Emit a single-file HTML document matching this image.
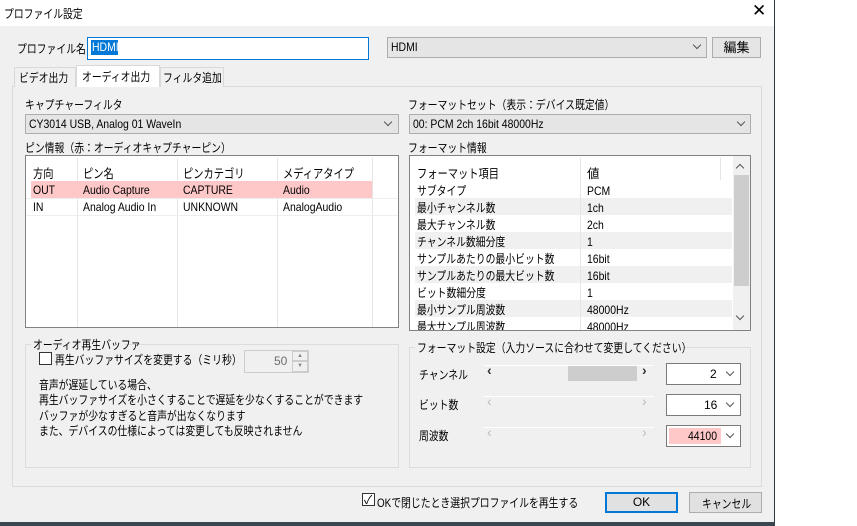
<!DOCTYPE html><html><head><meta charset="utf-8"><style>
*{box-sizing:border-box;margin:0;padding:0}
body{width:857px;height:526px;background:#fff;position:relative;overflow:hidden;font-family:"Liberation Sans","Noto Sans CJK JP",sans-serif;font-size:12px;color:#000}
.a{position:absolute;white-space:nowrap}
.j{transform:scaleX(.82);transform-origin:0 0}
.l{transform:scaleX(.87);transform-origin:0 0}
.cb{background:#e5e5e5;border:1px solid #adadad}
.arr{position:absolute;width:6px;height:6px;border-right:1px solid #555;border-bottom:1px solid #555;transform:rotate(45deg)}
.lst{background:#fff;border:1px solid #828282}
.grp{border:1px solid #dcdcdc}
</style></head><body>
<div class="a" style="left:0;top:0;width:775px;height:526px;background:#f0f0f0;border-right:1px solid #2b3a44"></div>
<div class="a" style="left:0;top:0;width:774px;height:26px;background:#fff"></div>
<div class="a j" style="left:4px;top:5px;font-size:12px">プロファイル設定</div>
<div class="a" style="left:752px;top:1px;font-size:17px;font-weight:lighter">✕</div>
<div class="a" style="left:0;top:522px;width:775px;height:4px;background:#3a4650"></div>

<div class="a j" style="left:17px;top:40px">プロファイル名</div>
<div class="a" style="left:87px;top:37px;width:282px;height:23px;background:#fff;border:1px solid #0078d7"></div>
<div class="a" style="left:91px;top:40px;width:27px;height:15px;background:#0078d7"></div>
<div class="a l" style="left:92px;top:40px;color:#fff">HDMI</div>
<div class="a cb" style="left:387px;top:37px;width:320px;height:21px"></div>
<div class="a l" style="left:391px;top:40px">HDMI</div>
<div class="arr" style="left:694px;top:42px"></div>
<div class="a cb" style="left:712px;top:37px;width:49px;height:21px;text-align:center;line-height:19px;font-size:13px">編集</div>

<div class="a" style="left:12px;top:86px;width:750px;height:401px;border:1px solid #dadada;background:#f0f0f0"></div>
<div class="a" style="left:14px;top:67px;width:62px;height:20px;border:1px solid #d9d9d9;border-bottom:none;background:#f0f0f0;"></div>
<div class="a j" style="left:19px;top:69px">ビデオ出力</div>
<div class="a" style="left:76px;top:65px;width:84px;height:22px;border:1px solid #d9d9d9;border-bottom:none;background:#fff"></div>
<div class="a j" style="left:82px;top:68px">オーディオ出力</div>
<div class="a" style="left:160px;top:67px;width:64px;height:20px;border:1px solid #d9d9d9;border-bottom:none;background:#f0f0f0"></div>
<div class="a j" style="left:163px;top:69px">フィルタ追加</div>

<div class="a j" style="left:25px;top:96px">キャプチャーフィルタ</div>
<div class="a cb" style="left:25px;top:114px;width:374px;height:20px"></div>
<div class="a l" style="left:29px;top:117px">CY3014 USB, Analog 01 WaveIn</div>
<div class="arr" style="left:385px;top:119px"></div>
<div class="a j" style="left:25px;top:139px">ピン情報（赤：オーディオキャプチャーピン）</div>
<div class="a lst" style="left:25px;top:155px;width:374px;height:173px;overflow:hidden">
 <div class="a" style="left:51px;top:2px;height:170px;border-left:1px solid #e5e5e5"></div>
 <div class="a" style="left:151px;top:2px;height:170px;border-left:1px solid #e5e5e5"></div>
 <div class="a" style="left:251px;top:2px;height:170px;border-left:1px solid #e5e5e5"></div>
 <div class="a" style="left:346px;top:2px;height:170px;border-left:1px solid #e5e5e5"></div>
 <div class="a" style="left:5px;top:25px;width:341px;height:17px;background:#ffc8c8"></div>
 <div class="a" style="left:0;top:42px;width:372px;border-top:1px solid #eee"></div>
 <div class="a" style="left:0;top:59px;width:372px;border-top:1px solid #eee"></div>
 <div class="a j" style="left:7px;top:7px;font-size:12.5px">方向</div><div class="a j" style="left:57px;top:7px;font-size:12.5px">ピン名</div><div class="a j" style="left:157px;top:7px;font-size:12.5px">ピンカテゴリ</div><div class="a j" style="left:257px;top:7px;font-size:12.5px">メディアタイプ</div>
 <div class="a l" style="left:7px;top:27px">OUT</div><div class="a l" style="left:57px;top:27px">Audio Capture</div><div class="a l" style="left:157px;top:27px">CAPTURE</div><div class="a l" style="left:257px;top:27px">Audio</div>
 <div class="a l" style="left:7px;top:44px">IN</div><div class="a l" style="left:57px;top:44px">Analog Audio In</div><div class="a l" style="left:157px;top:44px">UNKNOWN</div><div class="a l" style="left:257px;top:44px">AnalogAudio</div>
</div>

<div class="a j" style="left:408px;top:96px">フォーマットセット（表示：デバイス既定値）</div>
<div class="a cb" style="left:409px;top:114px;width:342px;height:20px"></div>
<div class="a l" style="left:413px;top:117px">00: PCM 2ch 16bit 48000Hz</div>
<div class="arr" style="left:738px;top:119px"></div>
<div class="a j" style="left:408px;top:139px">フォーマット情報</div>
<div class="a lst" style="left:409px;top:155px;width:342px;height:176px;overflow:hidden">
 <div class="a" style="left:5px;top:42px;width:317px;height:17px;background:#f0f0f0"></div>
 <div class="a" style="left:5px;top:76px;width:317px;height:17px;background:#f0f0f0"></div>
 <div class="a" style="left:5px;top:110px;width:317px;height:17px;background:#f0f0f0"></div>
 <div class="a" style="left:5px;top:144px;width:317px;height:17px;background:#f0f0f0"></div>
 <div class="a" style="left:170px;top:2px;height:175px;border-left:1px solid #e5e5e5"></div>
 <div class="a" style="left:310px;top:2px;height:22px;border-left:1px solid #e5e5e5"></div>
 <div class="a j" style="left:7px;top:7px;font-size:12.5px">フォーマット項目</div><div class="a" style="left:177px;top:7px;font-size:12.5px">値</div>
 <div class="a j" style="left:7px;top:27px;line-height:17px">サブタイプ<br>最小チャンネル数<br>最大チャンネル数<br>チャンネル数細分度<br>サンプルあたりの最小ビット数<br>サンプルあたりの最大ビット数<br>ビット数細分度<br>最小サンプル周波数<br>最大サンプル周波数</div>
 <div class="a l" style="left:177px;top:27px;line-height:17px">PCM<br>1ch<br>2ch<br>1<br>16bit<br>16bit<br>1<br>48000Hz<br>48000Hz</div>
 <div class="a" style="left:323px;top:0;width:17px;height:174px;background:#f0f0f0"></div>
 <div class="a" style="left:324px;top:19px;width:15px;height:111px;background:#cdcdcd"></div>
 <div class="a" style="left:327px;top:9px;width:6px;height:6px;border-left:1px solid #555;border-top:1px solid #555;transform:rotate(45deg)"></div>
 <div class="arr" style="left:327px;top:157px"></div>
</div>

<div class="a grp" style="left:25px;top:344px;width:374px;height:124px"></div>
<div class="a" style="left:31px;top:337px;width:94px;height:14px;background:#f0f0f0"></div>
<div class="a j" style="left:33px;top:336px">オーディオ再生バッファ</div>
<div class="a" style="left:39px;top:352px;width:13px;height:13px;border:1px solid #333;background:#fff"></div>
<div class="a j" style="left:55px;top:351px">再生バッファサイズを変更する（ミリ秒）</div>
<div class="a" style="left:244px;top:350px;width:65px;height:23px;border:1px solid #ccc;background:#f0f0f0"></div>
<div class="a" style="left:274px;top:354px;color:#6d6d6d">50</div>
<div class="a" style="left:292px;top:351px;width:16px;height:10px;border:1px solid #ccc;font-size:6px;color:#888;text-align:center;line-height:9px">▲</div>
<div class="a" style="left:292px;top:361px;width:16px;height:11px;border:1px solid #ccc;font-size:6px;color:#888;text-align:center;line-height:9px">▼</div>
<div class="a j" style="left:39px;top:378px;line-height:15.3px">音声が遅延している場合、<br>再生バッファサイズを小さくすることで遅延を少なくすることができます<br>バッファが少なすぎると音声が出なくなります<br>また、デバイスの仕様によっては変更しても反映されません</div>

<div class="a grp" style="left:409px;top:347px;width:342px;height:121px"></div>
<div class="a" style="left:415px;top:340px;width:268px;height:14px;background:#f0f0f0"></div>
<div class="a j" style="left:417px;top:339px">フォーマット設定（入力ソースに合わせて変更してください）</div>
<div class="a j" style="left:419px;top:366px">チャンネル</div>
<div class="a j" style="left:419px;top:396px">ビット数</div>
<div class="a j" style="left:419px;top:427px">周波数</div>
<div class="a" style="left:483px;top:365px;width:171px;height:17px;background:#f0f0f0;border-top:1px solid #fff"></div>
<div class="a" style="left:568px;top:366px;width:69px;height:15px;background:#cdcdcd"></div>
<div class="a" style="left:487px;top:362px;font-weight:bold;color:#333;font-size:14px">‹</div><div class="a" style="left:642px;top:362px;font-weight:bold;color:#333;font-size:14px">›</div>
<div class="a" style="left:483px;top:396px;width:171px;height:17px;border-top:1px solid #fff"></div>
<div class="a" style="left:487px;top:393px;color:#bbb;font-size:14px">‹</div><div class="a" style="left:642px;top:393px;color:#bbb;font-size:14px">›</div>
<div class="a" style="left:483px;top:427px;width:171px;height:17px;border-top:1px solid #fff"></div>
<div class="a" style="left:487px;top:424px;color:#bbb;font-size:14px">‹</div><div class="a" style="left:642px;top:424px;color:#bbb;font-size:14px">›</div>

<div class="a" style="left:666px;top:363px;width:75px;height:22px;border:1px solid #7a7a7a;background:#fff"></div>
<div class="a" style="left:710px;top:367px">2</div><div class="arr" style="left:727px;top:369px"></div>
<div class="a" style="left:666px;top:394px;width:75px;height:22px;border:1px solid #7a7a7a;background:#fff"></div>
<div class="a" style="left:704px;top:398px">16</div><div class="arr" style="left:727px;top:400px"></div>
<div class="a" style="left:666px;top:425px;width:75px;height:22px;border:1px solid #7a7a7a;background:#fff"></div>
<div class="a" style="left:669px;top:428px;width:52px;height:16px;background:#ffc8c8"></div>
<div class="a l" style="left:688px;top:429px">44100</div><div class="arr" style="left:727px;top:431px"></div>

<div class="a" style="left:362px;top:493px;width:13px;height:13px;border:1px solid #333;background:#fff"></div>
<div class="a" style="left:364px;top:491px;font-size:12px">✓</div>
<div class="a j" style="left:377px;top:494px">OKで閉じたとき選択プロファイルを再生する</div>
<div class="a" style="left:605px;top:492px;width:73px;height:21px;border:2px solid #0078d7;background:#e1e1e1;text-align:center;line-height:17px">OK</div>
<div class="a" style="left:689px;top:492px;width:73px;height:21px;border:1px solid #adadad;background:#e1e1e1"></div>
<div class="a j" style="left:702px;top:495px">キャンセル</div>
</body></html>
